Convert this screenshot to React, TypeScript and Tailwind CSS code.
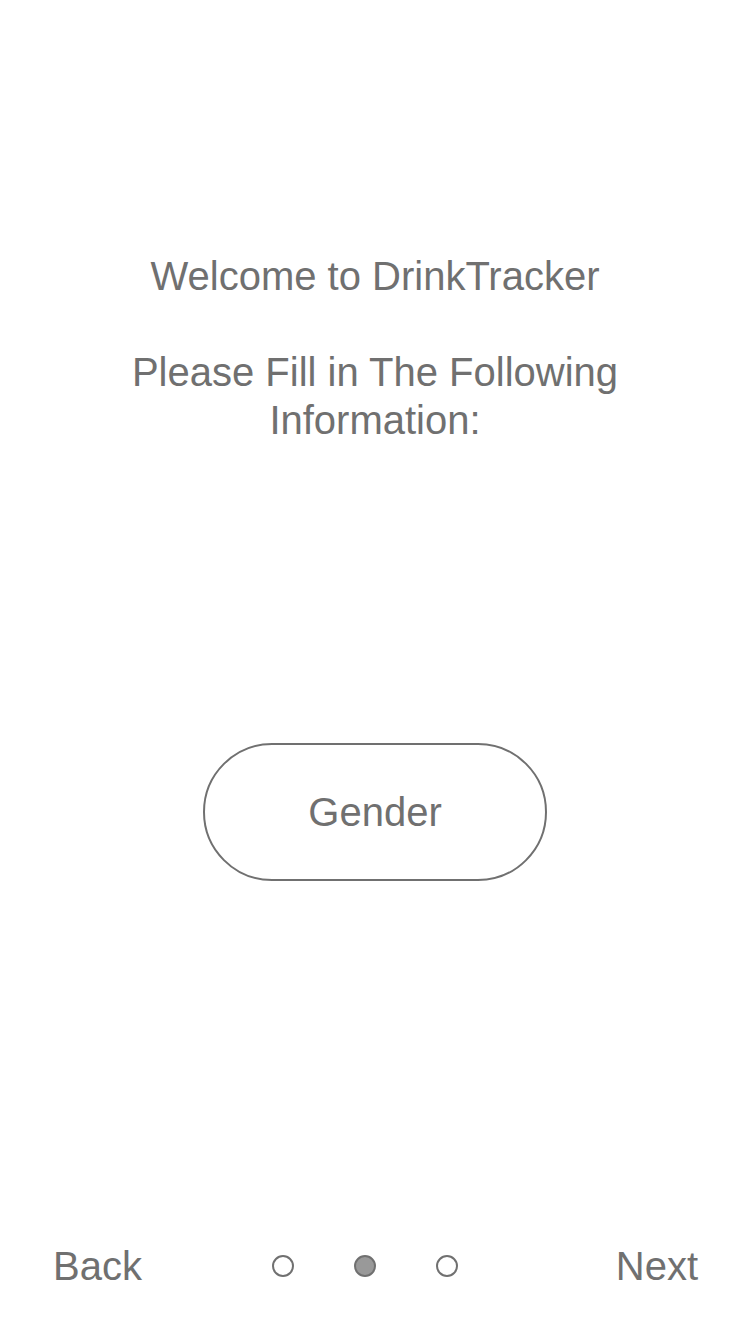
import React from "react";

const font = { fontFamily: '"Liberation Sans", Arial, sans-serif' };

export default function App() {
  const dots = [false, true, false];

  return (
    <div
      style={font}
      className="flex flex-col items-center w-[750px] h-[1334px] bg-white text-[#707070]"
    >
      {/* Welcome text */}
      <div className="pt-[252px] text-center text-[40px] leading-[48px]">
        <div>Welcome to DrinkTracker</div>
        <div className="h-[48px]"></div>
        <div>Please Fill in The Following</div>
        <div>Information:</div>
      </div>

      {/* Gender button */}
      <button className="mt-[299px] w-[344px] h-[138px] rounded-full border-2 border-[#707070] text-[40px] text-[#707070] flex items-center justify-center">
        Gender
      </button>

      {/* Bottom nav */}
      <div className="mt-auto mb-[44px] w-full flex flex-row items-center pl-[53px] pr-[52px] h-[48px]">
        <span className="text-[40px] w-[219px]">Back</span>
        <div className="flex flex-row items-center gap-[60px]">
          {dots.map((active, i) => (
            <div
              key={i}
              className={
                active
                  ? "w-[22px] h-[22px] rounded-full border-2 border-[#707070] bg-[#999999]"
                  : "w-[22px] h-[22px] rounded-full border-2 border-[#707070] bg-white"
              }
            ></div>
          ))}
        </div>
        <span className="ml-auto text-[40px]">Next</span>
      </div>
    </div>
  );
}
